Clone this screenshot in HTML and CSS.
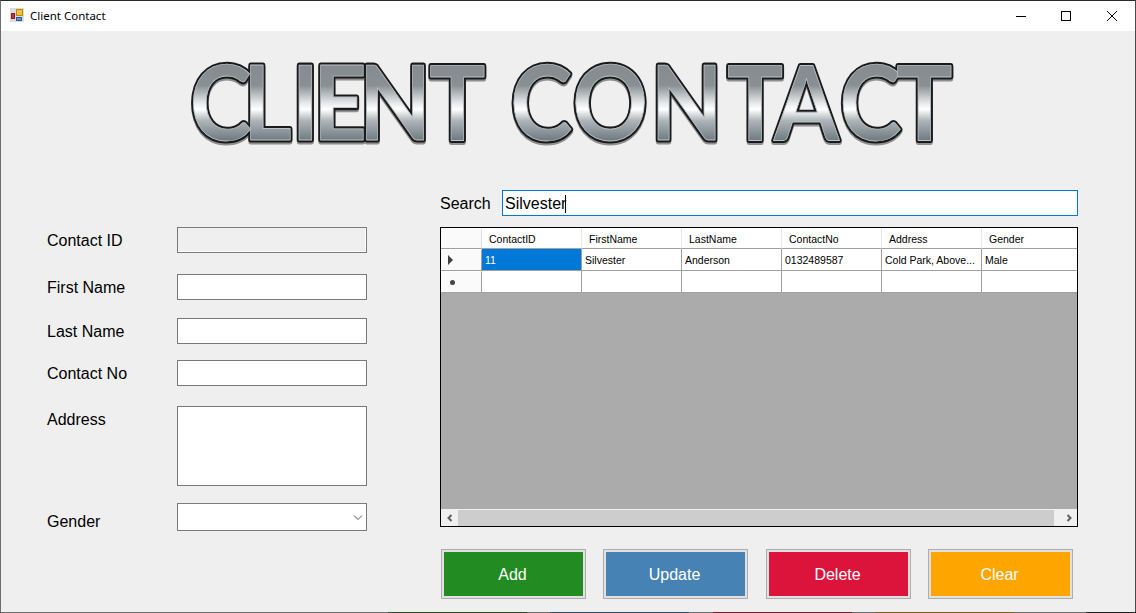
FILE: index.html
```html
<!DOCTYPE html>
<html lang="en">
<head>
    <meta charset="UTF-8">
    <meta name="viewport" content="width=device-width, initial-scale=1.0">
    <title>Client Contact</title>
    <link rel="stylesheet" href="styles.css">
</head>
<body>
    <div class="window">
        <div class="titlebar">
            <svg class="app-icon" width="14" height="14" viewBox="0 0 14 14">
                <rect x="0" y="0" width="14" height="14" fill="#dcdcdc"/>
                <rect x="6.5" y="1.5" width="6" height="6" fill="#f5c02c" stroke="#b98a1e"/>
                <rect x="1.5" y="5.5" width="3" height="5" fill="#d3302a" stroke="#7c2320"/>
                <rect x="6.5" y="9.5" width="5" height="3" fill="#5b97e0" stroke="#2c5c9e"/>
            </svg>
            <span class="app-title">Client Contact</span>
            <div class="win-btns">
                <svg width="46" height="30" viewBox="0 0 46 30"><path d="M19 15.5h10" stroke="#000" fill="none"/></svg>
                <svg width="46" height="30" viewBox="0 0 46 30"><rect x="18.5" y="10.5" width="9" height="9" stroke="#000" fill="none"/></svg>
                <svg width="46" height="30" viewBox="0 0 46 30"><path d="M18 10l10 10M28 10l-10 10" stroke="#000" fill="none"/></svg>
            </div>
        </div>

        <div class="content">
            <svg class="logo" width="800" height="130" viewBox="0 0 800 130">
                <defs>
                    <linearGradient id="chrome" gradientUnits="userSpaceOnUse" x1="0" y1="24" x2="0" y2="104">
                        <stop offset="0" stop-color="#858b8f"/>
                        <stop offset="0.28" stop-color="#899094"/>
                        <stop offset="0.5" stop-color="#e6e9ea"/>
                        <stop offset="0.58" stop-color="#ffffff"/>
                        <stop offset="0.72" stop-color="#aeb5b9"/>
                        <stop offset="1" stop-color="#66727a"/>
                    </linearGradient>
                </defs>
                <use class="logo-shadow" href="#logo-text" y="2"/>
                <use class="logo-outline" href="#logo-text"/>
                <g class="logo-face">
                    <text id="logo-text" transform="scale(0.9 1)" y="101" x="2 61 115 139 190 268 340 358 427 514 599 651 724 787">CLIENT CONTACT</text>
                </g>
            </svg>

            <div class="main">
                <form class="fields">
                    <div class="field id-field">
                        <label>Contact ID</label>
                        <input type="text" class="disabled" disabled>
                    </div>
                    <div class="field first-field">
                        <label>First Name</label>
                        <input type="text">
                    </div>
                    <div class="field last-field">
                        <label>Last Name</label>
                        <input type="text">
                    </div>
                    <div class="field phone-field">
                        <label>Contact No</label>
                        <input type="text">
                    </div>
                    <div class="field address-field">
                        <label>Address</label>
                        <textarea></textarea>
                    </div>
                    <div class="field gender-field">
                        <label>Gender</label>
                        <div class="combo">
                            <svg width="10" height="6" viewBox="0 0 10 6"><path d="M1 .5l4 4 4-4" stroke="#505050" fill="none"/></svg>
                        </div>
                    </div>
                </form>

                <div class="records">
                    <div class="search-row">
                        <label>Search</label>
                        <div class="search-box">Silvester<span class="caret"></span></div>
                    </div>

                    <div class="datagrid">
                        <div class="grid-row head">
                            <div class="row-head"></div>
                            <div class="cell">ContactID</div>
                            <div class="cell">FirstName</div>
                            <div class="cell">LastName</div>
                            <div class="cell">ContactNo</div>
                            <div class="cell">Address</div>
                            <div class="cell">Gender</div>
                        </div>
                        <div class="grid-row">
                            <div class="row-head"><span class="arrow"></span></div>
                            <div class="cell selected">11</div>
                            <div class="cell">Silvester</div>
                            <div class="cell">Anderson</div>
                            <div class="cell">0132489587</div>
                            <div class="cell">Cold Park, Above...</div>
                            <div class="cell">Male</div>
                        </div>
                        <div class="grid-row">
                            <div class="row-head"><span class="star"></span></div>
                            <div class="cell"></div>
                            <div class="cell"></div>
                            <div class="cell"></div>
                            <div class="cell"></div>
                            <div class="cell"></div>
                            <div class="cell"></div>
                        </div>
                        <div class="grid-empty"></div>
                        <div class="scrollbar">
                            <div class="scroll-btn">
                                <svg width="8" height="8" viewBox="0 0 8 8"><path d="M5.5 1L2.5 4l3 3" stroke="#606060" stroke-width="2" fill="none"/></svg>
                            </div>
                            <div class="scroll-thumb"></div>
                            <div class="scroll-btn end">
                                <svg width="8" height="8" viewBox="0 0 8 8"><path d="M2.5 1l3 3-3 3" stroke="#606060" stroke-width="2" fill="none"/></svg>
                            </div>
                        </div>
                    </div>

                    <div class="actions">
                        <button type="button" class="add">Add</button>
                        <button type="button" class="update">Update</button>
                        <button type="button" class="delete">Delete</button>
                        <button type="button" class="clear">Clear</button>
                    </div>
                </div>
            </div>
        </div>
    </div>
    <div class="desktop-strip">
        <span class="seg-a"></span><span class="seg-b"></span><span class="seg-c"></span><span class="seg-d"></span><span class="seg-e"></span><span class="seg-f"></span><span class="seg-g"></span><span class="seg-h"></span><span class="seg-i"></span>
    </div>
</body>
</html>
```

FILE: styles.css
```css
* {
    box-sizing: border-box;
}

html, body {
    margin: 0;
    height: 100%;
    overflow: hidden;
}

body {
    font-family: 'Liberation Sans', Arial, sans-serif;
    background-color: #f0f0f0;
    color: #000;
}

.window {
    height: 612px;
    border: 1px solid #6e6e6e;
    border-top-color: #2b2b2b;
    border-right-color: #4a4a4a;
    border-bottom: none;
    background-color: #efefef;
    display: flex;
    flex-direction: column;
}

.titlebar {
    height: 30px;
    background-color: #fff;
    display: flex;
    align-items: center;
    padding-left: 9px;
    flex-shrink: 0;
}

.app-icon {
    margin-right: 6px;
    margin-top: -2px;
}

.app-title {
    font-family: 'Noto Sans', sans-serif;
    font-size: 11.5px;
    margin-top: -1px;
}

.win-btns {
    margin-left: auto;
    display: flex;
}

.content {
    flex: 1;
    display: flex;
    flex-direction: column;
}

.logo {
    display: block;
    margin: 8px 0 0 187px;
    height: 130px;
    flex-shrink: 0;
    overflow: visible;
}

.logo text {
    font-family: Lato, 'Liberation Sans', sans-serif;
    font-weight: bold;
    font-size: 104px;
    stroke-linejoin: round;
}

.logo-shadow {
    fill: #8f8f8f;
    stroke: #8f8f8f;
    stroke-width: 5px;
}

.logo-outline {
    fill: #1a1a1a;
    stroke: #1a1a1a;
    stroke-width: 5px;
}

.logo-face {
    fill: url(#chrome);
    stroke: #b9c3c9;
    stroke-width: 0.8px;
}

.main {
    display: flex;
    margin-top: 21px;
}

.fields {
    width: 439px;
    padding: 37px 0 0 46px;
    flex-shrink: 0;
}

.field {
    display: flex;
    align-items: center;
    font-size: 16px;
}

.field label {
    width: 130px;
    flex-shrink: 0;
    margin-top: 2px;
}

.field input,
.field textarea,
.combo {
    display: block;
    width: 190px;
    height: 26px;
    border: 1px solid #7a7a7a;
    background-color: #fff;
    border-radius: 0;
    padding: 0;
    margin: 0;
    resize: none;
}

.field input.disabled {
    background-color: #efefef;
    border-right-color: #7a7a7a;
    box-shadow: inset -1px -1px 0 #fff;
}

.id-field label {
    margin-top: 1px;
}

.first-field {
    margin-top: 21px;
}

.last-field {
    margin-top: 18px;
}

.phone-field {
    margin-top: 16px;
}

.address-field {
    margin-top: 20px;
    align-items: flex-start;
}

.address-field label {
    margin-top: 5px;
}

.field textarea {
    height: 80px;
}

.gender-field {
    margin-top: 17px;
}

.gender-field label {
    margin-top: 10px;
}

.combo {
    height: 28px;
    display: flex;
    align-items: center;
    justify-content: flex-end;
    padding: 2px 3px 0 0;
}

.records {
    width: 638px;
    flex-shrink: 0;
}

.search-row {
    display: flex;
    align-items: center;
    height: 26px;
    font-size: 16px;
}

.search-row label {
    width: 62px;
    margin-top: 2px;
}

.search-box {
    width: 576px;
    height: 26px;
    border: 1px solid #0078d7;
    background-color: #fff;
    padding-left: 2px;
    line-height: 25px;
    font-size: 16px;
}

.caret {
    display: inline-block;
    width: 1px;
    height: 18px;
    background-color: #000;
    vertical-align: -4px;
    margin-left: -1px;
}

.datagrid {
    margin-top: 11px;
    height: 300px;
    border: 1px solid #000;
    background-color: #ababab;
    display: flex;
    flex-direction: column;
    font-size: 10.5px;
}

.grid-row {
    display: flex;
    height: 22px;
    background-color: #fff;
    flex-shrink: 0;
}

.grid-row.head {
    height: 21px;
}

.row-head {
    width: 41px;
    border-right: 1px solid #a0a0a0;
    border-bottom: 1px solid #a0a0a0;
    border-top: 1px solid #fff;
    display: flex;
    align-items: center;
    justify-content: center;
    padding-right: 21px;
    flex-shrink: 0;
    background-color: #fafafa;
}

.cell {
    width: 100px;
    border-right: 1px solid #a0a0a0;
    border-bottom: 1px solid #a0a0a0;
    padding-left: 3px;
    line-height: 23px;
    white-space: nowrap;
    overflow: hidden;
    flex-shrink: 0;
}

.cell:last-child {
    border-right: none;
    flex: 1;
}

.head .cell {
    padding-left: 7px;
    border-right-color: #e8e8e8;
    line-height: 22px;
}

.head .row-head {
    border-right-color: #e0e0e0;
}

.cell.selected {
    background-color: #0078d7;
    color: #fff;
}

.arrow {
    width: 0;
    height: 0;
    border-left: 5px solid #404040;
    border-top: 5px solid transparent;
    border-bottom: 5px solid transparent;
}

.star {
    width: 5px;
    height: 5px;
    border-radius: 50%;
    background-color: #444;
    margin-left: 3px;
}

.grid-empty {
    flex: 1;
}

.scrollbar {
    height: 17px;
    display: flex;
    border-top: 1px solid #f0f0f0;
    background-color: #f0f0f0;
}

.scroll-btn {
    width: 17px;
    display: flex;
    align-items: center;
    justify-content: center;
}

.scroll-btn.end {
    width: 23px;
    padding-left: 6px;
}

.scroll-thumb {
    flex: 1;
    background-color: #cdcdcd;
}

.actions {
    display: flex;
    gap: 17px;
    margin-top: 22px;
    margin-left: 1px;
}

.actions button {
    width: 145px;
    height: 50px;
    border: 1px solid #adadad;
    padding: 2px 2px 0 0;
    font-family: 'Liberation Sans', Arial, sans-serif;
    font-size: 16px;
    color: #fff;
    box-shadow: inset 0 0 0 2px #e1e1e1;
}

.add {
    background-color: #228b22;
}

.update {
    background-color: #4682b4;
}

.actions .delete {
    background-color: #dc143c;
    margin-left: 1px;
}

.clear {
    background-color: #ffa500;
}

.desktop-strip {
    height: 1px;
    display: flex;
    background-color: #555;
}

.desktop-strip span {
    display: block;
    height: 1px;
}

.seg-a { width: 388px; background-color: #6e6e6e; }
.seg-b { width: 139px; background-color: #2a4a24; }
.seg-c { width: 23px; background-color: #6e6e6e; }
.seg-d { width: 139px; background-color: #2f4a60; }
.seg-e { width: 24px; background-color: #6e6e6e; }
.seg-f { width: 139px; background-color: #6b1f2e; }
.seg-g { width: 23px; background-color: #6e6e6e; }
.seg-h { width: 139px; background-color: #7a5a14; }
.seg-i { width: 122px; background: linear-gradient(to right, #6e6e6e 72px, #222 72px); }
```
